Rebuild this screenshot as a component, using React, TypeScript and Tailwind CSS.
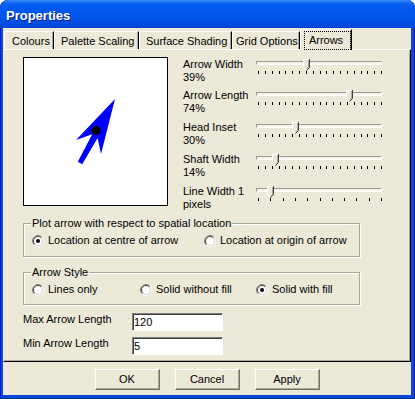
import React from 'react';

const sliders = [
  { label: 'Arrow Width', value: '39%', pos: 0.39, ticks: 19, h: 'h-[31px]' },
  { label: 'Arrow Length', value: '74%', pos: 0.74, ticks: 19, h: 'h-[32px]' },
  { label: 'Head Inset', value: '30%', pos: 0.3, ticks: 19, h: 'h-[32px]' },
  { label: 'Shaft Width', value: '14%', pos: 0.14, ticks: 19, h: 'h-[32px]' },
  { label: 'Line Width 1', value: 'pixels', pos: 0.1, ticks: 11, h: 'h-[31px]' },
];

const tabs = [
  { name: 'Colours', cls: 'w-[50px] pl-[7px]' },
  { name: 'Palette Scaling', cls: 'w-[85px] pl-[6px]' },
  { name: 'Surface Shading', cls: 'w-[93px] pl-[6px]' },
  { name: 'Grid Options', cls: 'w-[68px] pl-[3px]' },
];

const Thumb: React.FC<{ left: number }> = ({ left }) => (
  <svg width="7" height="12" viewBox="0 0 7 12" className="absolute top-[2px]" style={{ left }}>
    <path d="M0 0H7V8.5L3.5 12L0 8.5Z" fill="#ece9d8" />
    <path d="M0.5 8.5V0.5H6" stroke="#fff" fill="none" />
    <path d="M0.5 8.5L3.2 11.2" stroke="#fff" fill="none" />
    <path d="M6.5 0V8.5L3.5 11.5" stroke="#404040" fill="none" />
    <path d="M5.5 1V8.2L3.5 10.2" stroke="#aca899" fill="none" />
  </svg>
);

const Slider: React.FC<{ pos: number; ticks: number }> = ({ pos, ticks }) => {
  const span = 123;
  return (
    <div className="relative w-[130px] h-full">
      <div className="absolute left-[2px] right-[2px] top-[4px] h-[4px] border border-t-[#9d9b8c] border-l-[#9d9b8c] border-b-white border-r-white bg-[#f4f3ee]" />
      {Array.from({ length: ticks }).map((_, i) => (
        <div
          key={i}
          className="absolute top-[14px] w-px h-[3px] bg-black"
          style={{ left: 4 + Math.round((i * span) / (ticks - 1)) }}
        />
      ))}
      <Thumb left={4 + Math.round(pos * span) - 3} />
    </div>
  );
};

const Radio: React.FC<{ checked?: boolean }> = ({ checked }) => (
  <svg width="12" height="12" viewBox="0 0 12 12" className="shrink-0">
    <circle cx="6" cy="6" r="5" fill="#fff" />
    <path d="M2.1 9.9A5.5 5.5 0 0 1 9.9 2.1" stroke="#808080" fill="none" />
    <path d="M9.9 2.1A5.5 5.5 0 0 1 2.1 9.9" stroke="#fff" fill="none" />
    <path d="M2.8 9.2A4.5 4.5 0 0 1 9.2 2.8" stroke="#404040" fill="none" />
    <path d="M9.2 2.8A4.5 4.5 0 0 1 2.8 9.2" stroke="#d4d0c8" fill="none" />
    {checked && <circle cx="6" cy="6" r="2" fill="#000" />}
  </svg>
);

const RadioItem: React.FC<{ label: string; checked?: boolean; cls?: string }> = ({ label, checked, cls }) => (
  <div className={`flex items-center gap-[4px] ${cls ?? ''}`}>
    <Radio checked={checked} />
    <span className="leading-[13px] whitespace-nowrap">{label}</span>
  </div>
);

const GroupBox: React.FC<{ title: string; cls: string; children: React.ReactNode }> = ({ title, cls, children }) => (
  <div className={`relative w-[337px] border border-[#aca899] shadow-[inset_1px_1px_#fff,1px_1px_#fff] ${cls}`}>
    <span className="absolute -top-[7px] left-[7px] px-[1px] bg-[#ece9d8] leading-[13px] whitespace-nowrap">{title}</span>
    {children}
  </div>
);

const Field: React.FC<{ label: string; value: string; cls: string }> = ({ label, value, cls }) => (
  <div className={`flex items-start ${cls}`}>
    <span className="w-[109px] leading-[13px]">{label}</span>
    <input
      readOnly
      value={value}
      className="w-[91px] h-[18px] bg-white border border-t-[#808080] border-l-[#808080] border-b-white border-r-white shadow-[inset_1px_1px_#404040] px-[1px] text-[11px] outline-none"
    />
  </div>
);

const Button: React.FC<{ label: string }> = ({ label }) => (
  <button className="w-[65px] h-[21px] bg-[#ece9d8] border border-t-white border-l-white border-r-[#716f64] border-b-[#716f64] shadow-[inset_-1px_-1px_#aca899] text-[11px] leading-[13px]">
    {label}
  </button>
);

const App: React.FC = () => {
  return (
    <div className="w-[415px] h-[399px] flex flex-col rounded-t-[8px] overflow-hidden bg-[#0848da] shadow-[inset_1px_0_#0019cf,inset_-1px_0_#001ea0,inset_0_-1px_#001ea0] font-['Liberation_Sans',Arial,sans-serif] text-[11px] text-black">
      {/* title bar */}
      <div className="h-[28px] shrink-0 flex items-center pl-[6px] pt-[3px] bg-[linear-gradient(to_bottom,#3d8cf6_0%,#0a62f2_12%,#0058ee_30%,#0055ea_60%,#004ce0_85%,#0843d6_100%)]">
        <span className="text-white font-bold text-[13px] [text-shadow:1px_1px_#0a1f8f]">Properties</span>
      </div>

      <div className="flex-1 ml-[3px] mr-[4px] mb-[4px] bg-[#ece9d8] flex flex-col">
        {/* tabs */}
        <div className="h-[21px] pl-[1px] flex items-end">
          {tabs.map((t) => (
            <div
              key={t.name}
              className={`h-[18px] pt-[3px] leading-[13px] whitespace-nowrap overflow-hidden border-t border-l border-r border-t-white border-l-white border-r-black shadow-[inset_-1px_0_#aca899] ${t.cls}`}
            >
              {t.name}
            </div>
          ))}
          <div className="relative z-10 w-[52px] h-[21px] -mb-px pt-[4px] text-center leading-[13px] bg-[#ece9d8] border-t border-l border-r border-t-white border-l-white border-r-black shadow-[inset_-1px_0_#aca899]">
            Arrows
            <div className="absolute left-[3px] right-0 top-px bottom-0 border border-dotted border-black" />
          </div>
        </div>

        {/* panel */}
        <div className="h-[313px] border border-t-white border-l-white border-r-black border-b-black shadow-[inset_-1px_-1px_#aca899] pt-[7px] pl-[19px]">
          <div className="flex">
            <div className="w-[145px] h-[149px] border border-black bg-white">
              <svg width="143" height="147" viewBox="24 58 143 147">
                <polygon
                  points="115,99 101,154 97.6,138 82.2,164.2 77.8,161.8 92.2,134.3 76,140"
                  fill="#0000ff"
                />
                <circle cx="96" cy="130.5" r="4.5" fill="#000" />
              </svg>
            </div>
            <div className="ml-[15px] flex flex-col">
              {sliders.map((s) => (
                <div key={s.label} className={`flex ${s.h}`}>
                  <div className="w-[71px] pt-[1px] leading-[13px] whitespace-nowrap">
                    <div>{s.label}</div>
                    <div>{s.value}</div>
                  </div>
                  <Slider pos={s.pos} ticks={s.ticks} />
                </div>
              ))}
            </div>
          </div>

          <GroupBox title="Plot arrow with respect to spatial location" cls="mt-[8px] pt-[10px] pb-[9px] pl-[8px]">
            <div className="flex">
              <RadioItem label="Location at centre of arrow" checked cls="w-[172px]" />
              <RadioItem label="Location at origin of arrow" />
            </div>
          </GroupBox>

          <GroupBox title="Arrow Style" cls="mt-[15px] pt-[10px] pb-[8px] pl-[8px]">
            <div className="flex">
              <RadioItem label="Lines only" cls="w-[108px]" />
              <RadioItem label="Solid without fill" cls="w-[116px]" />
              <RadioItem label="Solid with fill" checked />
            </div>
          </GroupBox>

          <Field label="Max Arrow Length" value="120" cls="mt-[8px]" />
          <Field label="Min Arrow Length" value="5" cls="mt-[6px]" />
        </div>

        {/* buttons */}
        <div className="flex justify-center gap-[15px] pt-[7px]">
          <Button label="OK" />
          <Button label="Cancel" />
          <Button label="Apply" />
        </div>
      </div>
    </div>
  );
};

export default App;
